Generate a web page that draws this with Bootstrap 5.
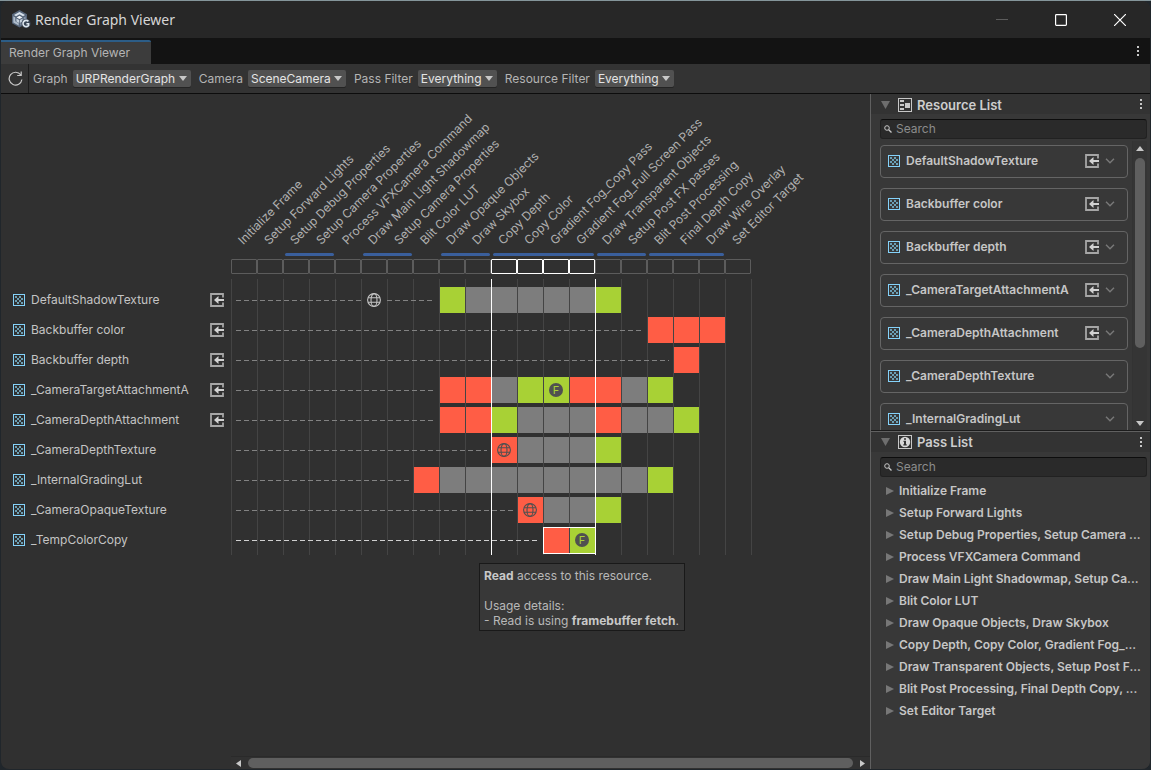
<!DOCTYPE html>
<html lang="en" data-bs-theme="dark">
<head>
<meta charset="utf-8">
<meta name="viewport" content="width=device-width, initial-scale=1">
<title>Render Graph Viewer</title>
<link href="https://cdn.jsdelivr.net/npm/bootstrap@5.3.0/dist/css/bootstrap.min.css" rel="stylesheet">
<style>
  :root { --col: 26px; --line: #444; --text: #c4c4c4; --blue: #3a5f9c; }
  body { background: #20262b; color: var(--text); font: 12px/16px Inter, sans-serif; border-top: 1px solid #84959a; }
  .app-window { height: calc(100vh - 1px); padding: 0 1px 1px; }
  .app-frame { background: #303030; border-radius: 8px; }
  svg { display: block; flex-shrink: 0; }
  button { background: none; border: 0; padding: 0; color: inherit; }

  .titlebar { height: 37px; background: #272727; font: 14px/20px "Noto Sans", sans-serif; color: #d6d6d6; padding: 0 24px 0 10px; }
  .window-buttons { gap: 47px; }
  .tabstrip { height: 26px; background: #131313; }
  .tab-btn { height: 24px; width: 150px; background: #3c3c3c; border-top: 2px solid #2c5d87; border-radius: 0 2px 0 0; padding: 0 8px; text-align: left; font-size: 12px; color: #b4b4b4; }
  .tab-menu { padding: 4px 10px; }
  .toolbar { height: 30px; background: #333; border-bottom: 1px solid #0c0c0c; color: #b4b4b4; }
  .refresh { width: 28px; height: 29px; border-right: 1px solid #1c1c1c; margin-right: 4px; padding-left: 1px; }
  .tool-field { gap: 5px; margin-right: 8px; }
  .tool-select { width: auto; height: 17px; padding: 0 15px 0 3px; font: 12px/16px Inter, sans-serif; color: #e4e4e4; background: #515151 url("data:image/svg+xml,%3Csvg xmlns='http://www.w3.org/2000/svg' width='8' height='5'%3E%3Cpath d='M0 0h8L4 5z' fill='%23c8c8c8'/%3E%3C/svg%3E") no-repeat right 4px center / 8px 5px; border: 0; border-radius: 2px; box-shadow: 0 1px 0 #242424; }

  .graph-grid { display: grid; grid-template-columns: 230px max-content; grid-template-rows: 159px auto auto; }
  .pass-cols { display: grid; grid-template-columns: repeat(20, var(--col)); }
  .pass-label { width: 0; padding-left: 15px; margin-bottom: 5px; align-self: end; white-space: nowrap; color: #b0b0b0; }
  .pass-label span { display: inline-block; transform: rotate(-45deg); transform-origin: 0 100%; }
  .merge-bar { height: 3px; margin: 0 1px 0 2px; border-radius: 2px; background: var(--blue); }
  .pass-box { height: 15px; margin-top: 3px; border: 1px solid #5c5c5c; border-radius: 1px; }
  .pass-box.active { border-color: #fff; }
  .names { padding: 11px 7px 0 12px; }
  .name-row { height: 30px; gap: 6px; }
  .timeline { display: grid; grid-template-columns: repeat(20, var(--col)); grid-template-rows: repeat(9, 30px); padding: 6px 1px 0 0; margin-top: 5px; position: relative;
    background: repeating-linear-gradient(to right, var(--line) 0 1px, transparent 1px var(--col)); }
  .cell-box { height: 26px; margin: 2px 0 2px 1px; padding-right: 1px; color: #505050; }
  .is-read { background: #a8d135; } .is-write { background: #ff5d45; } .is-idle { background: #7d7d7d; }
  .dashes { height: 1px; align-self: center; margin: 1px 4px 0 5px; background: repeating-linear-gradient(to right, #828282 0 5px, transparent 5px 8px); }
  .dashes.to-icon { margin-right: 0; }
  .dashes.from-icon { margin-left: 0; }
  .dashes.bright { background: repeating-linear-gradient(to right, #d0d0d0 0 5px, transparent 5px 8px); }
  .pass-frame { border: solid #fff; border-width: 0 1px; margin: -6px -1px 0 0; }
  .pick-frame { border: 1px solid #fff; margin: 2px -1px 1px 0; }
  .letter-dot { width: 14px; height: 14px; border-radius: 50%; background: #505050; color: #a8d135; font-size: 11px; line-height: 14px; text-align: center; }
  .tip { left: 248px; top: 284px; background: #383838; border: 1px solid #191919; padding: 4px 5px 2px 4px; line-height: 15px; white-space: nowrap; color: #b8b8b8; }
  .tip b { color: #c8c8c8; }

  .bar-track { background: #313131; border-top: 1px solid #2a2a2a; height: 13px; margin-left: 230px; padding: 0 5px; gap: 7px; }
  .bar-thumb { background: #5f5f5f; border-radius: 5px; }
  .h-thumb { height: 10px; }
  .side { width: 280px; background: #383838; border-left: 1px solid #606060; }
  .side section { flex: 1 1 0; min-height: 0; }
  .side-head { height: 20px; background: #333; padding: 1px 7px 0 10px; font-size: 13px; font-weight: 600; }
  .side-head h2 { font: inherit; margin: 0 0 0 1px; color: #cecece; }
  .search-box { height: 20px; margin: 5px 3px 0 9px; background: #2a2a2a; border: 1px solid #212121; border-top-color: #0d0d0d; border-radius: 3px; padding: 0 3px; gap: 4px; }
  .search-box input { border: 0; background: none; color: var(--text); outline: 0; font-size: 12px; line-height: 16px; padding: 0; min-width: 0; }
  .search-box input::placeholder { color: #8c8c8c; opacity: 1; }
  .res-scroll { padding: 6px 0 0 9px; gap: 10px; }
  .res-item { height: 33px; flex: none; border: 1px solid #656565; border-radius: 4px; padding: 0 12px 2px 7px; gap: 6px; font-weight: 600; color: #c6c6c6; text-align: left; }
  .v-track { width: 15px; margin: 2px 3px 0 4px; border-left: 1px solid #333; background: #353535; padding: 5px 0 4px; gap: 7px; }
  .v-thumb { width: 10px; height: 68%; }
  .split { border-top: 1px solid #1c1c1c; border-bottom: 1px solid #606060; height: 2px; }
  .pass-item { height: 22px; gap: 5px; font-weight: 600; color: #c6c6c6; text-align: left; }
  .pass-items { padding: 3px 0 0 15px; }
</style>
</head>
<body class="overflow-hidden">

<svg width="0" height="0" class="position-absolute" aria-hidden="true">
  <symbol id="i-tex" viewBox="0 0 12 12"><rect x=".5" y=".5" width="11" height="11" fill="none" stroke="#84d2fa"/><path fill="#6ba0b6" d="M2 2h2v2H2zM6 2h2v2H6zM4 4h2v2H4zM8 4h2v2H8zM2 6h2v2H2zM6 6h2v2H6zM4 8h2v2H4zM8 8h2v2H8z"/></symbol>
  <symbol id="i-import" viewBox="0 0 14 14"><path d="M13 4.500V1H1v12h12V9.500" fill="none" stroke="#a6a6a6" stroke-width="1.800"/><path d="M14 6v2H8.500v3L4 7l4.500-4v3z" fill="#d2d2d2"/></symbol>
  <symbol id="i-globe" viewBox="0 0 14 14"><g fill="none" stroke="currentColor" stroke-width="1.100"><circle cx="7" cy="7" r="6.400"/><ellipse cx="7" cy="7" rx="3" ry="6.400"/><path d="M1 4.700h12M1 9.300h12"/></g></symbol>
  <symbol id="i-chev" viewBox="0 0 10 6"><path d="M1 .7l4 4 4-4" fill="none" stroke="#777" stroke-width="1.500"/></symbol>
  <symbol id="i-kebab" viewBox="0 0 4 11"><path fill="#c8c8c8" d="M1 0h2v2H1zM1 4h2v2H1zM1 8h2v2H1z"/></symbol>
  <symbol id="i-mag" viewBox="0 0 8 8"><circle cx="3" cy="3" r="2.300" fill="none" stroke="#c8c8c8"/><path d="M4.700 4.700L7.500 7.500" stroke="#c8c8c8" stroke-width="1.300"/></symbol>
  <symbol id="i-right" viewBox="0 0 8 8"><path d="M0 0l8 4-8 4z" fill="#777"/></symbol>
</svg>

<div class="app-window">
 <div class="app-frame d-flex flex-column h-100 overflow-hidden">
  <header class="titlebar d-flex align-items-center flex-shrink-0">
    <svg width="20" height="19" viewBox="0 0 20 19" aria-hidden="true">
      <path d="M8.500 0l7.500 4.200v9L8.500 17.500 1 13.200v-9z" fill="#56657a"/>
      <path d="M8.500 2l5.500 3.100-2 1.200-3.500-2-3.500 2-2-1.200z" fill="#d8e2ec"/>
      <path d="M2.300 6.300l2 1.200v3.700l3.400 2v2.300L2.300 12.400z" fill="#aebccb"/>
      <path d="M14.700 6.300l-2 1.200v3.700l-3.400 2v2.300l5.400-3.100z" fill="#8796aa"/>
      <path d="M8.500 5.700l2.900 1.700-2.900 1.700-2.900-1.700z" fill="#f0f4f8"/>
      <path d="M5.400 8.400l2.700 1.600v3l-2.700-1.600zM11.600 8.400L8.900 10v3l2.700-1.600z" fill="#c3cfdb"/>
      <circle cx="15" cy="13.500" r="4.600" fill="#3a4656"/>
      <path d="M17.400 11.400a3.100 3.100 0 1 0 .2 4v-1.600h-2.200" fill="none" stroke="#dde6ee" stroke-width="1.600"/>
    </svg>
    <span class="ms-1">Render Graph Viewer</span>
    <div class="window-buttons d-flex align-items-center ms-auto">
      <button aria-label="Minimize"><svg width="12" height="12" viewBox="0 0 12 12"><path d="M0 5.500h12" stroke="#5c5c5c"/></svg></button>
      <button aria-label="Maximize"><svg width="12" height="12" viewBox="0 0 12 12"><rect x=".6" y=".6" width="10.800" height="10.800" rx=".8" fill="none" stroke="#fff" stroke-width="1.200"/></svg></button>
      <button aria-label="Close"><svg width="12" height="12" viewBox="0 0 12 12"><path d="M0 0l12 12M12 0L0 12" stroke="#fff" stroke-width="1.200"/></svg></button>
    </div>
  </header>

  <div class="tabstrip d-flex align-items-end flex-shrink-0">
    <button class="tab-btn">Render Graph Viewer</button>
    <button class="tab-menu ms-auto align-self-center" aria-label="Tab menu"><svg width="4" height="11"><use href="#i-kebab"/></svg></button>
  </div>

  <div class="toolbar d-flex align-items-center flex-shrink-0">
    <button class="refresh d-flex align-items-center justify-content-center" aria-label="Capture"><svg width="15" height="15" viewBox="0 0 15 15"><path d="M12.800 4A6.400 6.400 0 1 0 13.900 8.500M13.200.5v4H9.200" fill="none" stroke="#c8c8c8" stroke-width="1.200"/></svg></button>
    <div class="tool-field d-flex align-items-center"><label for="s1">Graph</label><select id="s1" class="tool-select form-select"><option>URPRenderGraph</option></select></div>
    <div class="tool-field d-flex align-items-center"><label for="s2">Camera</label><select id="s2" class="tool-select form-select"><option>SceneCamera</option></select></div>
    <div class="tool-field d-flex align-items-center"><label for="s3">Pass Filter</label><select id="s3" class="tool-select form-select"><option>Everything</option></select></div>
    <div class="tool-field d-flex align-items-center"><label for="s4">Resource Filter</label><select id="s4" class="tool-select form-select"><option>Everything</option></select></div>
  </div>

  <div class="d-flex flex-grow-1 overflow-hidden">
    <main class="flex-grow-1 d-flex flex-column overflow-hidden">
      <div class="graph-grid flex-grow-1 align-content-start">
        <div></div>
        <div class="pass-cols" id="labels"></div>
        <div></div>
        <div class="pass-cols" id="boxes"></div>
        <div class="names" id="names"></div>
        <div class="timeline" id="timeline">
          <div class="tip position-absolute" role="tooltip"><b>Read</b> access to this resource.<br><br>Usage details:<br>- Read is using <b>framebuffer fetch</b>.</div>
        </div>
      </div>
      <div class="bar-track d-flex align-items-center">
        <svg width="5" height="7"><path d="M5 0v7L0 3.500z" fill="#c8c8c8"/></svg>
        <div class="bar-thumb h-thumb flex-grow-1"></div>
        <svg width="5" height="7"><path d="M0 0v7l5-3.500z" fill="#c8c8c8"/></svg>
      </div>
    </main>

    <aside class="side flex-shrink-0 d-flex flex-column">
      <section class="d-flex flex-column">
        <div class="side-head d-flex align-items-center flex-shrink-0">
          <svg width="9" height="8" class="me-2"><path d="M0 0h9L4.500 8z" fill="#6e6e6e"/></svg>
          <svg width="14" height="14" viewBox="0 0 14 14" class="me-1"><rect x=".5" y=".5" width="13" height="13" fill="none" stroke="#c8c8c8"/><path fill="#c8c8c8" d="M2 2h4v2H2zM2 6h4v2H2zM2 10h4v2H2zM7 5h5v5H7z"/></svg>
          <h2>Resource List</h2>
          <button class="ms-auto" aria-label="Resource list menu"><svg width="4" height="11"><use href="#i-kebab"/></svg></button>
        </div>
        <div class="search-box d-flex align-items-center flex-shrink-0"><svg width="8" height="8"><use href="#i-mag"/></svg><input class="flex-grow-1" type="text" placeholder="Search" aria-label="Search resources"></div>
        <div class="d-flex flex-grow-1 overflow-hidden">
          <div class="res-scroll flex-grow-1 d-flex flex-column overflow-hidden" id="resources"></div>
          <div class="v-track d-flex flex-column align-items-center">
            <svg width="8" height="5"><path d="M0 5h8L4 0z" fill="#c8c8c8"/></svg>
            <div class="bar-thumb v-thumb"></div>
            <svg width="8" height="5" class="mt-auto"><path d="M0 0h8L4 5z" fill="#c8c8c8"/></svg>
          </div>
        </div>
        <div class="split flex-shrink-0"></div>
      </section>
      <section class="d-flex flex-column">
        <div class="side-head d-flex align-items-center flex-shrink-0">
          <svg width="9" height="8" class="me-2"><path d="M0 0h9L4.500 8z" fill="#6e6e6e"/></svg>
          <svg width="14" height="14" viewBox="0 0 14 14" class="me-1"><rect x=".5" y=".5" width="13" height="13" fill="none" stroke="#c8c8c8"/><circle cx="7" cy="7" r="5.200" fill="#d8d8d8"/><path fill="#333" d="M6 3.200h2v1.600H6zM5.500 5.800H8v3.400h.7v1.300H5.300V9.200H6V7h-.5z"/></svg>
          <h2>Pass List</h2>
          <button class="ms-auto" aria-label="Pass list menu"><svg width="4" height="11"><use href="#i-kebab"/></svg></button>
        </div>
        <div class="search-box d-flex align-items-center flex-shrink-0"><svg width="8" height="8"><use href="#i-mag"/></svg><input class="flex-grow-1" type="text" placeholder="Search" aria-label="Search passes"></div>
        <div class="pass-items d-flex flex-column" id="passes"></div>
      </section>
    </aside>
  </div>
 </div>
</div>

<script src="https://cdn.jsdelivr.net/npm/bootstrap@5.3.0/dist/js/bootstrap.bundle.min.js"></script>
<script>
  // Native passes: each group of render passes that is merged together.
  const groups = [
    ['Initialize Frame'], ['Setup Forward Lights'],
    ['Setup Debug Properties', 'Setup Camera Properties'],
    ['Process VFXCamera Command'],
    ['Draw Main Light Shadowmap', 'Setup Camera Properties'],
    ['Blit Color LUT'],
    ['Draw Opaque Objects', 'Draw Skybox'],
    ['Copy Depth', 'Copy Color', 'Gradient Fog_Copy Pass', 'Gradient Fog_Full Screen Pass'],
    ['Draw Transparent Objects', 'Setup Post FX passes'],
    ['Blit Post Processing', 'Final Depth Copy', 'Draw Wire Overlay'],
    ['Set Editor Target']
  ];
  // Headings of the pass list, shortened to fit the side panel.
  const passTitles = [
    'Initialize Frame', 'Setup Forward Lights', 'Setup Debug Properties, Setup Camera ...',
    'Process VFXCamera Command', 'Draw Main Light Shadowmap, Setup Ca...', 'Blit Color LUT',
    'Draw Opaque Objects, Draw Skybox', 'Copy Depth, Copy Color, Gradient Fog_...',
    'Draw Transparent Objects, Setup Post F...', 'Blit Post Processing, Final Depth Copy, ...',
    'Set Editor Target'
  ];
  // w = write, r = read, - = alive but unused; start is the first pass used.
  const resources = [
    { name: 'DefaultShadowTexture', imported: true, start: 8, use: 'r-----r', globalAt: 5 },
    { name: 'Backbuffer color', imported: true, start: 16, use: 'www' },
    { name: 'Backbuffer depth', imported: true, start: 17, use: 'w' },
    { name: '_CameraTargetAttachmentA', imported: true, start: 8, use: 'ww-rrww-r', fetch: 12 },
    { name: '_CameraDepthAttachment', imported: true, start: 8, use: 'wwr---w--r' },
    { name: '_CameraDepthTexture', start: 10, use: 'w---r', global: 10 },
    { name: '_InternalGradingLut', start: 7, use: 'w--------r' },
    { name: '_CameraOpaqueTexture', start: 11, use: 'w--r', global: 11 },
    { name: '_TempColorCopy', start: 12, use: 'wr', fetch: 13, picked: true }
  ];
  const icon = (id, w, h) => `<svg width="${w}" height="${h}" aria-hidden="true"><use href="#i-${id}"/></svg>`;
  const put = (id, html) => document.getElementById(id).insertAdjacentHTML('beforeend', html);
  const at = (c, n, r) => `style="grid-column:${c + 1} / span ${n};grid-row:${r}"`;

  put('labels', groups.flat().map(p => `<div class="pass-label"><span>${p}</span></div>`).join(''));
  let col = 0, bars = '', boxes = '';
  for (const g of groups) {
    if (g.length > 1) bars += `<div class="merge-bar" ${at(col, g.length, 1)}></div>`;
    g.forEach((p, i) => boxes += `<div class="pass-box ${g.length === 4 ? 'active' : ''}" ${at(col + i, 1, 2)}></div>`);
    col += g.length;
  }
  put('boxes', bars + boxes);

  put('names', resources.map(r => `<div class="name-row d-flex align-items-center">${icon('tex', 12, 12)}<span class="me-auto">${r.name}</span>${r.imported ? icon('import', 14, 14) : ''}</div>`).join(''));

  const kinds = { r: 'is-read', w: 'is-write', '-': 'is-idle' };
  const center = 'd-flex align-items-center justify-content-center';
  let t = '';
  resources.forEach((r, i) => {
    const row = i + 1, dash = r.picked ? 'dashes bright' : 'dashes';
    if (r.globalAt) {
      t += `<div class="${dash} to-icon" ${at(0, r.globalAt, row)}></div><div class="${center}" ${at(r.globalAt, 1, row)}>${icon('globe', 14, 14)}</div>`;
      t += `<div class="${dash} from-icon" ${at(r.globalAt + 1, r.start - r.globalAt - 1, row)}></div>`;
    } else t += `<div class="${dash}" ${at(0, r.start, row)}></div>`;
    [...r.use].forEach((u, k) => {
      const c = r.start + k;
      t += `<div class="cell-box ${kinds[u]} ${center}" ${at(c, 1, row)}>${r.fetch === c ? '<span class="letter-dot">F</span>' : r.global === c ? icon('globe', 14, 14) : ''}</div>`;
    });
  });
  t += `<div class="pass-frame" style="grid-column:11 / span 4;grid-row:1 / -1"></div>`;
  t += `<div class="pick-frame" ${at(12, 2, 9)}></div>`;
  put('timeline', t);

  put('resources', resources.slice(0, 7).map(r => `<button class="res-item d-flex align-items-center">${icon('tex', 12, 12)}<span class="me-auto">${r.name}</span>${r.imported ? icon('import', 14, 14) : ''}${icon('chev', 10, 6)}</button>`).join(''));
  put('passes', passTitles.map(p => `<button class="pass-item d-flex align-items-center">${icon('right', 8, 8)}<span class="text-nowrap">${p}</span></button>`).join(''));
</script>
</body>
</html>
